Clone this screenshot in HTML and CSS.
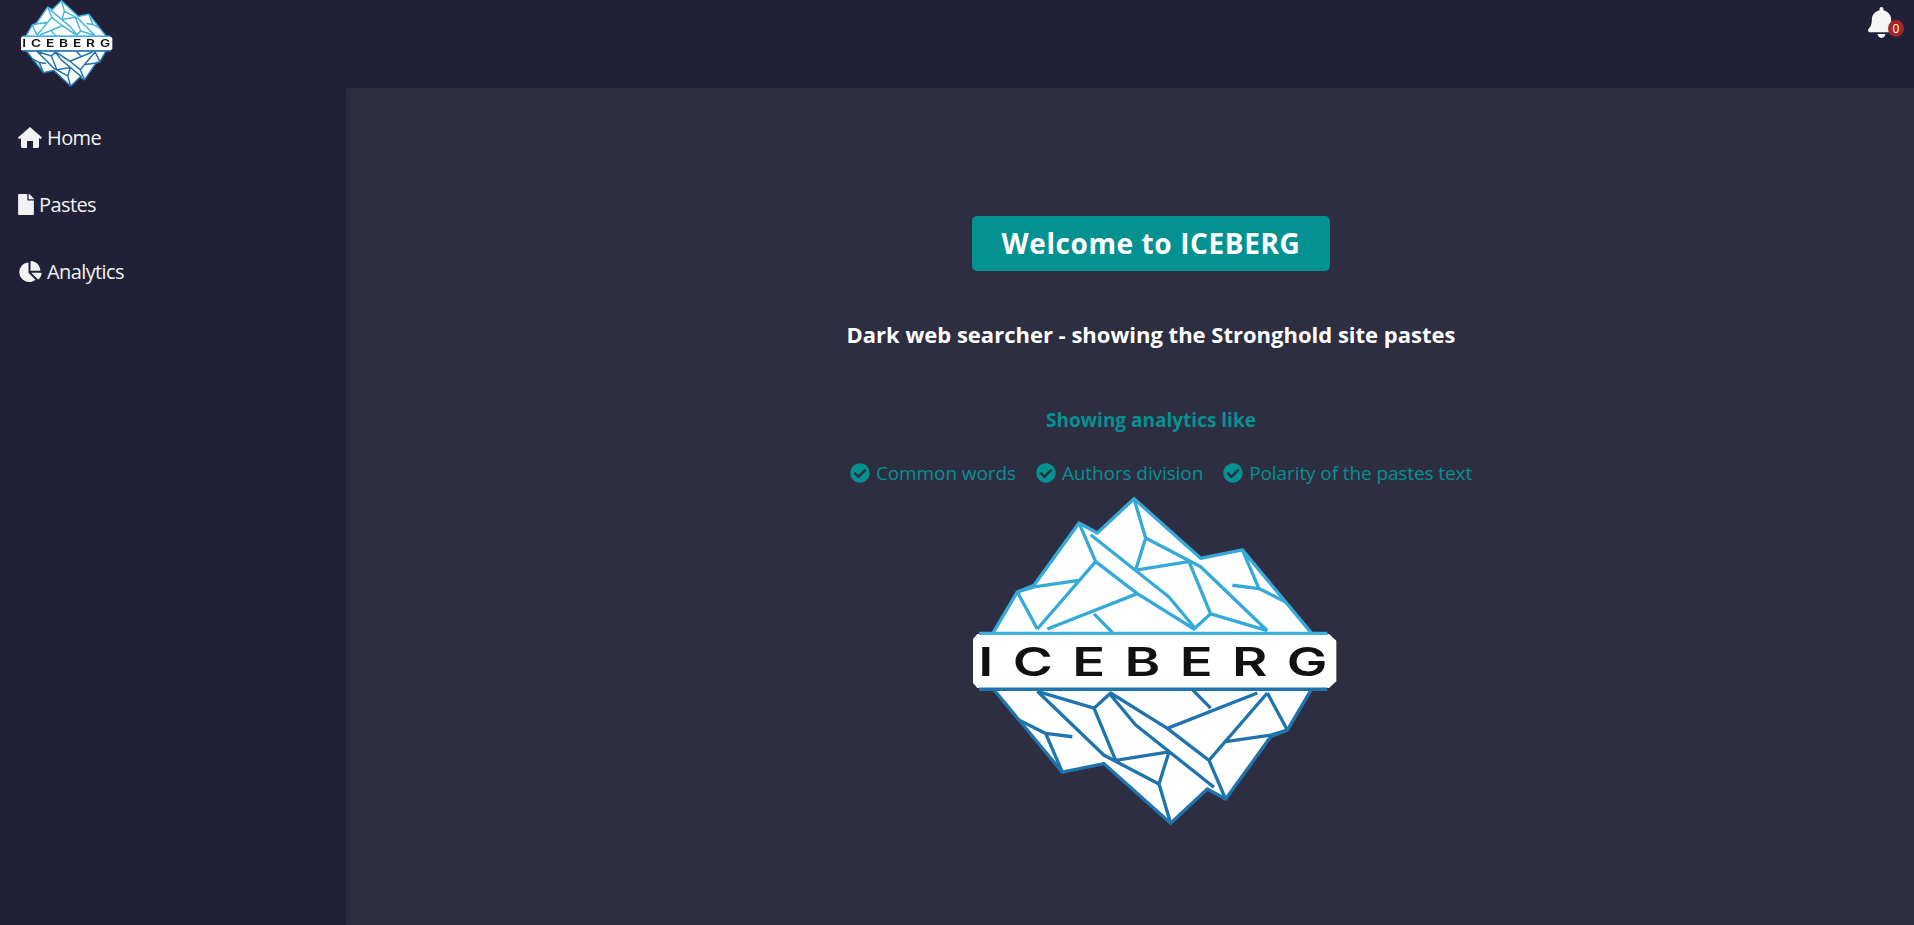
FILE: index.html
```html
<!DOCTYPE html>
<html lang="en">
<head>
    <meta charset="UTF-8">
    <meta name="viewport" content="width=device-width, initial-scale=1.0">
    <title>Iceberg</title>
    <link rel="stylesheet" href="styles.css">
</head>
<body>
    <svg class="defs" width="0" height="0">
        <symbol id="logo" viewBox="50 20 1110 980" preserveAspectRatio="none">
            <g id="logoHalf" stroke-linejoin="round" fill="none">
                <path fill="#fff" d="M545 28L745 205L870 180L1080 430H120L195 305L245 285L380 100L435 130Z"/>
                <path d="M380 100L430 215L255 415M195 305L255 415M195 305L245 290L385 270M285 415L555 310M425 370L480 425M415 135L650 320L730 415M430 215L555 310L725 415L775 370L710 215L550 240L580 145L545 28M580 145L745 230L945 420M775 370L945 420M870 180L920 295L1000 335M840 285L920 295"/>
            </g>
            <use href="#logoHalf" class="logo-lower" transform="rotate(180 600 510)"/>
            <path class="logo-band" d="M75 430H1130L1152 450V570L1130 590H75L62 575V445Z"/>
            <path fill="none" class="logo-top" d="M80 428H1125"/>
            <path fill="none" class="logo-bottom" d="M80 594H1125"/>
            <text x="78" y="554" textLength="1106" lengthAdjust="spacingAndGlyphs" class="logo-text">ICEBERG</text>
        </symbol>
    </svg>

    <header class="topbar">
        <svg class="logo-small"><use href="#logo"/></svg>
        <div class="bell">
            <svg viewBox="0 0 448 512"><path d="M224 512c35.32 0 63.97-28.65 63.97-64H160.03c0 35.35 28.65 64 63.97 64zm215.39-149.71c-19.32-20.76-55.47-51.99-55.47-154.29 0-77.7-54.48-139.9-127.94-155.16V32c0-17.67-14.32-32-31.98-32s-31.98 14.33-31.98 32v20.84C118.56 68.1 64.08 130.3 64.08 208c0 102.3-36.15 133.53-55.47 154.29-6 6.45-8.66 14.16-8.61 21.71.11 16.4 12.98 32 32.1 32h383.8c19.12 0 32-15.6 32.1-32 .05-7.55-2.61-15.27-8.61-21.71z"/></svg>
            <span class="badge">0</span>
        </div>
    </header>

    <div class="page">
        <nav class="sidebar">
            <a href="#" class="nav-link">
                <svg class="home-icon" viewBox="0 0 24 21"><path d="M12 0L24 10.5L22.5 12.2L21 11V19.5A1.5 1.5 0 0 1 19.5 21H15V14H9V21H4.5A1.5 1.5 0 0 1 3 19.5V11L1.5 12.2L0 10.5Z"/></svg>
                Home
            </a>
            <a href="#" class="nav-link">
                <svg class="file-icon" viewBox="0 0 384 512"><path d="M224 136V0H24C10.7 0 0 10.7 0 24v464c0 13.3 10.7 24 24 24h336c13.3 0 24-10.7 24-24V160H248c-13.2 0-24-10.8-24-24zm160-14.1v6.1H256V0h6.1c6.4 0 12.5 2.5 17 7l97.9 98c4.5 4.5 7 10.6 7 16.9z"/></svg>
                Pastes
            </a>
            <a href="#" class="nav-link">
                <svg class="pie-icon" viewBox="0 0 544 512"><path d="M527.79 288H290.5l158.03 158.03c6.04 6.04 15.98 6.53 22.19.68 38.7-36.46 65.32-85.61 73.13-140.86 1.34-9.46-6.51-17.85-16.06-17.85zm-15.83-64.8C503.72 103.74 408.26 8.28 288.8.04 279.68-.59 272 7.1 272 16.24V240h223.77c9.14 0 16.82-7.68 16.19-16.8zM224 288V50.71c0-9.55-8.39-17.4-17.84-16.06C86.99 51.49-4.1 155.6.14 280.37 4.5 408.51 114.83 513.59 243.03 511.98c50.4-.63 96.97-16.87 135.26-44.03 7.9-5.6 8.42-17.23 1.57-24.08L224 288z"/></svg>
                Analytics
            </a>
        </nav>

        <main class="content">
            <h1 class="welcome">Welcome to ICEBERG</h1>
            <h2 class="subtitle">Dark web searcher - showing the Stronghold site pastes</h2>
            <h3 class="like-title">Showing analytics like</h3>
            <ul class="like-list">
                <li><svg viewBox="0 0 512 512"><use href="#check"/></svg>Common words</li>
                <li><svg viewBox="0 0 512 512"><use href="#check"/></svg>Authors division</li>
                <li><svg viewBox="0 0 512 512"><use href="#check"/></svg>Polarity of the pastes text</li>
            </ul>
            <svg class="logo-big"><use href="#logo"/></svg>
        </main>
    </div>

    <svg class="defs" width="0" height="0">
        <path id="check" d="M504 256c0 136.967-111.033 248-248 248S8 392.967 8 256 119.033 8 256 8s248 111.033 248 248zM227.314 387.314l184-184c6.248-6.248 6.248-16.379 0-22.627l-22.627-22.627c-6.248-6.249-16.379-6.25-22.628 0L216 308.118l-70.059-70.059c-6.248-6.248-16.379-6.248-22.628 0l-22.627 22.627c-6.248 6.248-6.248 16.379 0 22.627l104 104c6.249 6.249 16.379 6.249 22.628.001z"/>
    </svg>
</body>
</html>
```

FILE: styles.css
```css
* {
    box-sizing: border-box;
}

html, body {
    height: 100%;
}

body {
    margin: 0;
    font-family: "Open Sans", "Noto Sans", sans-serif;
    background-color: #2d2e42;
    color: #fff;
    display: flex;
    flex-direction: column;
    overflow: hidden;
}

.defs {
    position: absolute;
}

/* top bar */
.topbar {
    height: 88px;
    flex-shrink: 0;
    background-color: #202137;
    display: flex;
    justify-content: space-between;
    padding-left: 20px;
}

.logo-small {
    width: 93px;
    height: 87px;
    filter: blur(0.5px);
    stroke: #45b4e2;
    stroke-width: 17;
}

.logo-small .logo-text {
    fill: #333;
}

.bell {
    position: relative;
    width: 27px;
    height: 31px;
    margin: 7px 19px 0 0;
}

.bell svg {
    display: block;
    width: 27px;
    height: 31px;
    fill: #f5f5f5;
}

.badge {
    position: absolute;
    top: 13px;
    right: -9px;
    width: 16px;
    height: 17px;
    border-radius: 50%;
    background-color: #a62528;
    font-size: 12px;
    line-height: 17px;
    text-align: center;
}

/* sidebar */
.page {
    flex: 1;
    display: flex;
    min-height: 0;
}

.sidebar {
    width: 346px;
    flex-shrink: 0;
    background-color: #202137;
    box-shadow: 2px 0 6px rgba(32, 33, 55, 0.5);
    padding-top: 34px;
    display: flex;
    flex-direction: column;
    gap: 36px;
}

.nav-link {
    display: flex;
    align-items: center;
    gap: 5px;
    height: 31px;
    padding-left: 18px;
    font-size: 20px;
    letter-spacing: -0.6px;
    color: #f2f2f2;
    text-decoration: none;
}

.nav-link svg {
    fill: #f2f2f2;
    height: 21px;
}

.home-icon {
    width: 24px;
}

.file-icon {
    width: 16px;
}

.pie-icon {
    width: 23px;
    margin-left: 1px;
}

/* main */
.content {
    flex: 1;
    min-width: 0;
    display: flex;
    flex-direction: column;
    align-items: center;
    padding: 128px 0 0 42px;
}

.welcome {
    margin: 0;
    width: 358px;
    height: 55px;
    background-color: #049191;
    border-radius: 5px;
    font-size: 28px;
    font-weight: 700;
    line-height: 55px;
    letter-spacing: 0.6px;
    text-align: center;
}

.subtitle {
    margin: 48px 0 0;
    font-size: 22px;
    font-weight: 700;
    line-height: 30px;
}

.like-title {
    margin: 58px 0 0;
    font-size: 19px;
    font-weight: 700;
    line-height: 26px;
    color: #049191;
}

.like-list {
    list-style: none;
    margin: 27px 0 0 20px;
    padding: 0;
    display: flex;
    gap: 20px;
    font-size: 19px;
    line-height: 26px;
    letter-spacing: -0.1px;
    color: #049191;
}

.like-list li {
    display: flex;
    align-items: center;
    gap: 6px;
}

.like-list svg {
    width: 20px;
    height: 20px;
    fill: #049191;
}

.logo-big {
    width: 370px;
    height: 330px;
    margin: 10px 0 0 6px;
    filter: blur(0.5px);
    stroke: #35a9d8;
    stroke-width: 10;
}

.logo-lower {
    stroke: #1f74ad;
}

.logo-band {
    fill: #fff;
    stroke: none;
}

.logo-top {
    stroke: #3fb0dc;
}

.logo-bottom {
    stroke: #1f74ad;
}

.logo-text {
    font-family: "Inter", "Liberation Sans", sans-serif;
    font-size: 118px;
    font-weight: 600;
    letter-spacing: 42px;
    fill: #111;
    stroke: none;
}
```
